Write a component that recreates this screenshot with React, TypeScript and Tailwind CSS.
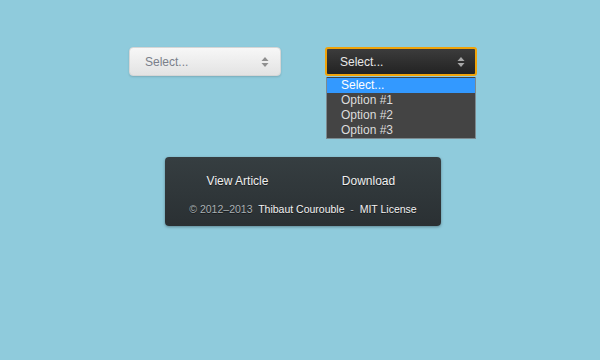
import React from "react";

function Arrows({ color }: { color: string }) {
  return (
    <svg width="8" height="12" viewBox="0 0 8 12" className="shrink-0">
      <path d="M4 1 L7.5 5 L0.5 5 Z" fill={color} />
      <path d="M4 11 L7.5 7 L0.5 7 Z" fill={color} />
    </svg>
  );
}

export default function App() {
  const options = ["Select...", "Option #1", "Option #2", "Option #3"];

  return (
    <div
      className="w-[600px] h-[360px] bg-[#8fcbdc] overflow-hidden"
      style={{ fontFamily: '"Liberation Sans", Arial, sans-serif' }}
    >
      <div className="flex gap-[44px] pl-[129px] pt-[47px]">
        <div className="w-[152px] h-[29px] flex items-center justify-between pl-[15px] pr-[11px] rounded-[4px] border border-[#d6d6d6] bg-gradient-to-b from-[#f7f7f7] to-[#e3e3e3] shadow-[0_1px_2px_rgba(0,0,0,0.15)] text-[12px] text-[#7a7f8a]">
          <span>Select...</span>
          <Arrows color="#8f8f8f" />
        </div>

        <div className="relative w-[152px]">
          <div className="h-[29px] flex items-center justify-between pl-[13px] pr-[10px] rounded-[3px] border-2 border-[#f0a30a] bg-gradient-to-b from-[#3c3c3c] to-[#232323] text-[12px] text-[#e8e8e8]">
            <span>Select...</span>
            <Arrows color="#a8a8a8" />
          </div>
          <ul className="absolute left-px top-[30px] w-[150px] bg-[#444444] border border-t-0 border-[#7c8a90] text-[12px] leading-[15px] pt-px">
            {options.map((o, i) => (
              <li
                key={o}
                className={
                  i === 0
                    ? "bg-[#3399ff] text-white pl-[14px]"
                    : "text-[#dcdcdc] pl-[14px]"
                }
              >
                {o}
              </li>
            ))}
          </ul>
        </div>
      </div>

      <div className="ml-[165px] mt-[81px] w-[276px] h-[69px] rounded-[4px] bg-gradient-to-b from-[#363e41] to-[#2a3033] shadow-[0_1px_3px_rgba(0,0,0,0.35)] flex flex-col">
        <div className="flex pt-[15px] text-[12px] text-[#f0f0f0] [text-shadow:0_1px_0_rgba(0,0,0,0.5)]">
          <span className="w-[145px] text-center">View Article</span>
          <span className="w-[117px] text-center">Download</span>
        </div>
        <div className="mt-[12px] text-center text-[10.5px] text-[#a9b0b3] whitespace-pre [text-shadow:0_1px_0_rgba(0,0,0,0.5)]">
          <span>© 2012–2013  </span>
          <span className="text-[#f2f2f2]">Thibaut Courouble</span>
          <span>  -  </span>
          <span className="text-[#f2f2f2]">MIT License</span>
        </div>
      </div>
    </div>
  );
}
